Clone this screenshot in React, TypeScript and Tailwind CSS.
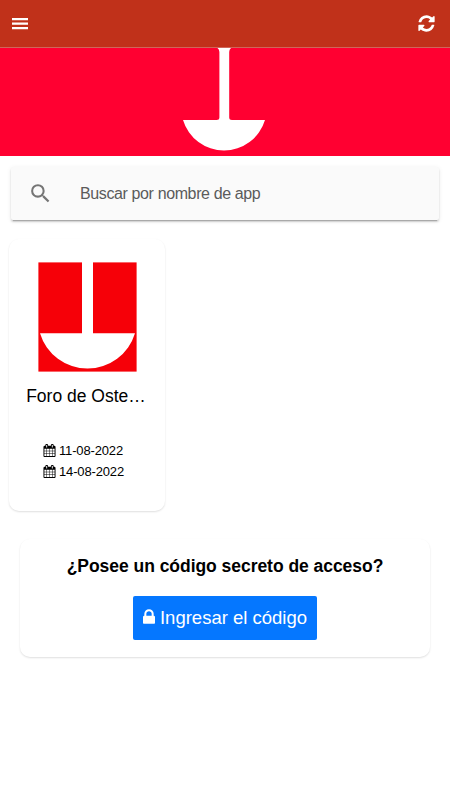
import React from "react";
import { MdSearch } from "react-icons/md";

type IconProps = { className?: string };

const MenuIcon = ({ className }: IconProps) => (
  <svg viewBox="0 0 16 12" fill="currentColor" className={className}>
    <path d="M0 0H16V2.2H0ZM0 4.5H16V6.7H0ZM0 9H16V11.2H0Z" />
  </svg>
);

const RefreshIcon = ({ className }: IconProps) => (
  <svg viewBox="0 0 1792 1792" fill="currentColor" className={className}>
    <path d="M1639 1056q0 5-1 7-64 268-268 434.5t-478 166.5q-146 0-282.5-55t-243.5-157l-129 129q-19 19-45 19t-45-19-19-45v-448q0-26 19-45t45-19h448q26 0 45 19t19 45-19 45l-137 137q71 66 161 102t187 36q134 0 250-65t186-179q11-17 53-117 8-23 30-23h192q13 0 22.5 9.5t9.5 22.5zm25-800v448q0 26-19 45t-45 19h-448q-26 0-45-19t-19-45 19-45l138-138q-148-137-349-137-134 0-250 65t-186 179q-11 17-53 117-8 23-30 23h-199q-13 0-22.5-9.5t-9.5-22.5v-7q65-268 270-434.5t480-166.5q146 0 284 55.5t245 156.5l130-129q19-19 45-19t45 19 19 45z" />
  </svg>
);

const CalendarIcon = ({ className }: IconProps) => (
  <svg viewBox="64 0 1664 1792" fill="currentColor" className={className}>
    <path d="M192 1664h288v-288h-288v288zm352 0h320v-288h-320v288zm-352-352h288v-320h-288v320zm352 0h320v-320h-320v320zm-352-384h288v-288h-288v288zm736 736h320v-288h-320v288zm-384-736h320v-288h-320v288zm768 736h288v-288h-288v288zm-384-352h320v-320h-320v320zm-352-864v-288q0-13-9.5-22.5t-22.5-9.5h-64q-13 0-22.5 9.5t-9.5 22.5v288q0 13 9.5 22.5t22.5 9.5h64q13 0 22.5-9.5t9.5-22.5zm736 864h288v-320h-288v320zm-384-384h320v-288h-320v288zm384 0h288v-288h-288v288zm32-480v-288q0-13-9.5-22.5t-22.5-9.5h-64q-13 0-22.5 9.5t-9.5 22.5v288q0 13 9.5 22.5t22.5 9.5h64q13 0 22.5-9.5t9.5-22.5zm384-64v1280q0 52-38 90t-90 38h-1408q-52 0-90-38t-38-90v-1280q0-52 38-90t90-38h128v-96q0-66 47-113t113-47h64q66 0 113 47t47 113v96h384v-96q0-66 47-113t113-47h64q66 0 113 47t47 113v96h128q52 0 90 38t38 90z" />
  </svg>
);

const LockIcon = ({ className }: IconProps) => (
  <svg viewBox="320 128 1152 1408" fill="currentColor" className={className}>
    <path d="M640 768h512v-192q0-106-75-181t-181-75-181 75-75 181v192zm832 96v576q0 40-28 68t-68 28h-960q-40 0-68-28t-28-68v-576q0-40 28-68t68-28h32v-192q0-184 132-316t316-132 316 132 132 316v192h32q40 0 68 28t28 68z" />
  </svg>
);

const BannerLogo = () => (
  <svg viewBox="0 0 82 104" className="h-[104px] w-[82px]" fill="#fff">
    <path d="M34.5 0H48Q46.2 1.5 46.2 4V69.5Q46.2 72 49 72H82A42.8 42.8 0 0 1 0 72H33.5Q36.4 72 36.4 69.5V4Q36.4 1.5 34.5 0Z" />
  </svg>
);

const ForoLogo = () => (
  <svg viewBox="0 0 99 110" className="h-[110px] w-[99px]">
    <rect x="0.4" y="0.4" width="98.2" height="109.2" fill="#f60008" />
    <path d="M44 0H55V71.3H97A49.6 49.6 0 0 1 2 71.3H44Z" fill="#fff" />
  </svg>
);

const dates = ["11-08-2022", "14-08-2022"];

const App = () => {
  return (
    <div className="min-h-screen bg-white font-['Liberation_Sans',Arial,sans-serif] text-black">
      <header className="flex h-12 items-center justify-between border-b border-[#d0665a] bg-[#c0311a] pr-[14px] pl-3 text-white">
        <button aria-label="Menú">
          <MenuIcon className="h-3 w-4" />
        </button>
        <button aria-label="Actualizar">
          <RefreshIcon className="size-[19px]" />
        </button>
      </header>

      <div className="flex h-[108px] justify-center bg-[#ff0031] pr-[2px]">
        <BannerLogo />
      </div>

      <main className="flex flex-col">
        <label className="mx-[11px] mt-[11px] flex h-[53px] items-center rounded-[2px] bg-[#fafafa] pl-[17px] shadow-[0_2px_2px_0_rgba(0,0,0,0.14),0_3px_1px_-2px_rgba(0,0,0,0.2),0_1px_5px_0_rgba(0,0,0,0.08)]">
          <MdSearch className="size-[25px] text-[#757575]" />
          <input
            type="text"
            placeholder="Buscar por nombre de app"
            className="ml-[27px] flex-1 bg-transparent text-base tracking-[-0.38px] text-[#5b5b5b] outline-none placeholder:text-[#5b5b5b]"
          />
        </label>

        <article className="mt-[19px] ml-[9px] flex h-[272px] w-[156px] flex-col items-center rounded-[10px] bg-white pt-[23px] shadow-[0_1px_2px_rgba(0,0,0,0.13)]">
          <ForoLogo />
          <h2 className="mt-[10px] mr-[2px] w-[122px] text-center text-[17.5px] leading-7 whitespace-nowrap">
            Foro de Oste…
          </h2>
          <div className="mt-[30px] mr-[7px] flex flex-col">
            {dates.map((date) => (
              <p key={date} className="flex h-[21px] items-center gap-[3px] text-[13px] tracking-[-0.15px]">
                <CalendarIcon className="mb-px h-[13px] w-[13px]" />
                {date}
              </p>
            ))}
          </div>
        </article>

        <section className="mx-5 mt-7 flex h-[118px] flex-col items-center rounded-[10px] bg-white pt-[13px] shadow-[0_1px_2px_rgba(0,0,0,0.13)]">
          <h3 className="text-[17.5px] leading-7 font-bold tracking-[-0.04px]">
            ¿Posee un código secreto de acceso?
          </h3>
          <button className="mt-4 flex h-11 w-[184px] items-center justify-center gap-[5px] rounded-[2px] bg-[#0577ff] text-[18.5px] whitespace-nowrap text-white">
            <LockIcon className="mb-[3px] h-[15px] w-3" />
            Ingresar el código
          </button>
        </section>
      </main>
    </div>
  );
};

export default App;
